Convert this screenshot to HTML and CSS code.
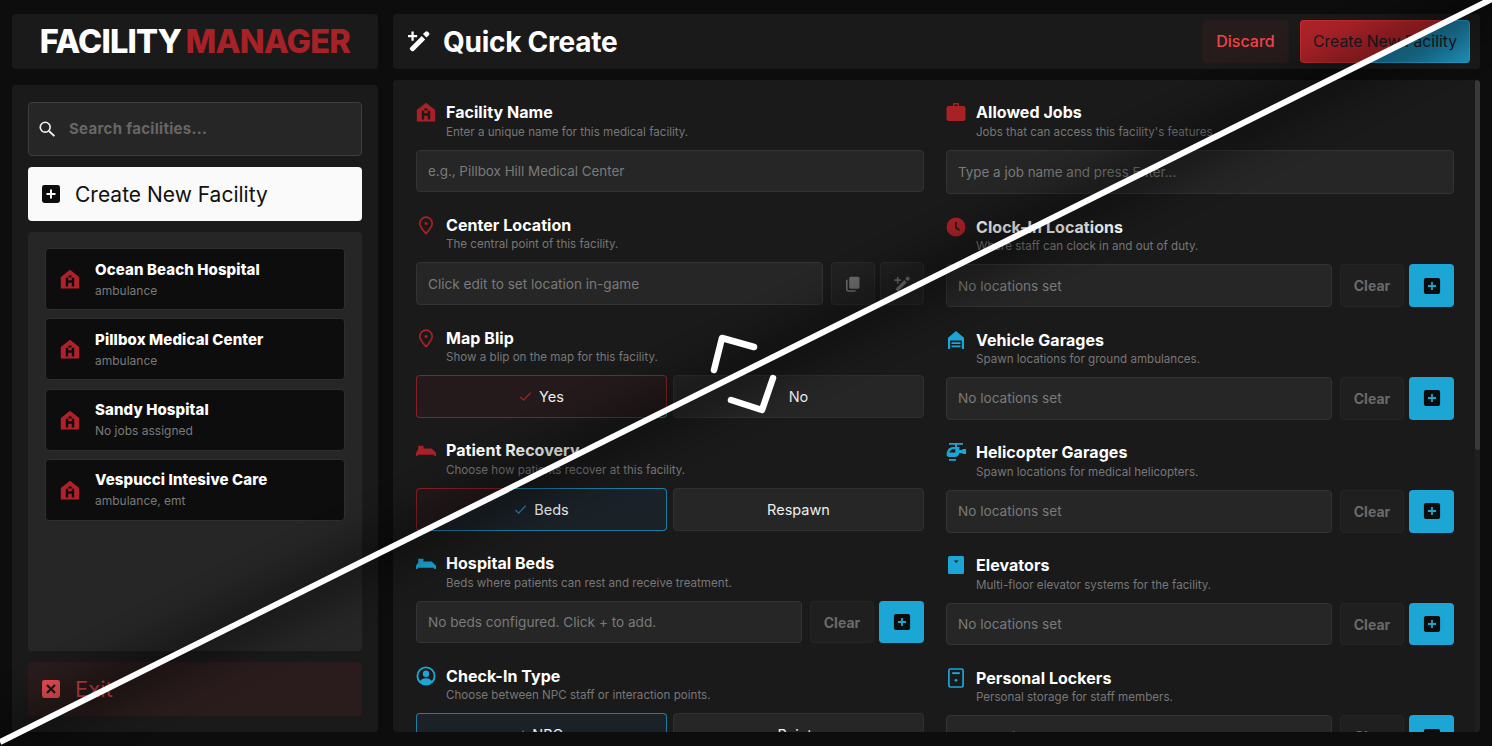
FILE: index.html
```html
<!DOCTYPE html>
<html lang="en">
<head>
<meta charset="utf-8">
<title>Facility Manager</title>
<link rel="stylesheet" href="styles.css">
</head>
<body>
<svg class="defs" width="0" height="0" aria-hidden="true">
  <symbol id="i-hospital" viewBox="0 0 20 20"><path fill-rule="evenodd" d="M.8 19.500V8L10 .8 19.200 8v11.500zM5.800 17.500h2.400v-3.800h3.600v3.800h2.400V8.800h-2.400v2.500H8.200V8.800H5.800zM8.400 8.400h3.200V6.600H8.400z"/></symbol>
  <symbol id="i-pin" viewBox="0 0 20 20"><path fill="none" stroke="currentColor" stroke-width="1.700" d="M10 18.600c-3.600-4-6.200-7-6.200-10.200a6.200 6.200 0 0 1 12.400 0c0 3.200-2.600 6.200-6.200 10.200z"/><circle cx="10" cy="8.400" r="1.500"/></symbol>
  <symbol id="i-bed" viewBox="0 0 20 20"><path d="M0 16v-3.200L2.200 9.600V5.800h5.300v2.600h8.200l4.300 4.400V16h-1.800v-1.300H1.800V16z"/></symbol>
  <symbol id="i-user" viewBox="0 0 20 20"><circle cx="10" cy="10" r="8.600" fill="none" stroke="currentColor" stroke-width="1.900"/><circle cx="10" cy="7.800" r="3.200"/><path d="M3.800 15.200c1.400-2 3.600-3 6.200-3s4.800 1 6.200 3c-1.600 2-3.800 3.200-6.200 3.200s-4.600-1.200-6.200-3.200z"/></symbol>
  <symbol id="i-case" viewBox="0 0 20 20"><path fill-rule="evenodd" d="M7 4V2.200C7 1.500 7.500 1 8.200 1h3.600c.7 0 1.200.5 1.200 1.200V4h4.600c1 0 1.900.9 1.900 1.900v11.200c0 1-.9 1.900-1.900 1.900H2.400c-1 0-1.900-.9-1.900-1.900V5.900c0-1 .9-1.900 1.900-1.900zM8.400 4h3.200V2.400H8.400z"/></symbol>
  <symbol id="i-clock" viewBox="0 0 20 20"><path fill-rule="evenodd" d="M10 .5a9.500 9.500 0 1 1 0 19 9.500 9.500 0 0 1 0-19zM9 5v6l4 3 1-1.400-3.300-2.400V5z"/></symbol>
  <symbol id="i-garage" viewBox="0 0 20 20"><path fill-rule="evenodd" d="M2 19V7.800L10 1l8 6.800V19h-2.200v-8.500H4.200V19zM5.500 12.300h9v1.800h-9zm0 3.100h9v1.800h-9z"/></symbol>
  <symbol id="i-heli" viewBox="0 0 20 20"><path fill-rule="evenodd" d="M3 1h14v1.800H11V5h2.400v3H16l1-1h3v5h-3l-1-1h-2.700c-.5 2.600-2 4-4.300 4H3c-1.300 0-2.400-.9-2.400-2.200C.6 8.600 3 5 6.800 5H9V2.800H3zM3.300 10.500h6V7.300H6.500C5.200 7.700 4 8.800 3.300 10.500zM3 17h7v1.800H3z"/></symbol>
  <symbol id="i-lift" viewBox="0 0 20 20"><path fill-rule="evenodd" d="M4 1h12.400c1 0 1.600.7 1.600 1.600v14.800c0 1-.7 1.600-1.600 1.600H3.600C2.700 19 2 18.300 2 17.400V2.600C2 1.700 2.800 1 4 1zm4 4.500h4.500L10.200 8z"/></symbol>
  <symbol id="i-locker" viewBox="0 0 20 20"><rect x="2.900" y="1" width="14.200" height="18" rx="1.400" fill="none" stroke="currentColor" stroke-width="1.700"/><rect x="6.200" y="4.200" width="7.600" height="1.900"/><circle cx="10" cy="12.300" r="1.400"/></symbol>
  <symbol id="i-wand" viewBox="0 0 24 24"><path d="M21 2.600l.9.9c.7.7.7 1.700 0 2.400l-2.300 2.300-3.300-3.300 2.300-2.300c.7-.7 1.700-.7 2.400 0zM15.100 6.700l3.300 3.300L7.400 21c-.6.600-1.500.6-2.100 0l-1.200-1.200c-.6-.6-.6-1.500 0-2.100zM5.200 2.500h2.200v3.300h3.300V8H7.400v3.300H5.200V8H1.900V5.800h3.300z"/></symbol>
  <symbol id="i-copy" viewBox="0 0 20 20"><path d="M7.500 2h8c1 0 1.700.7 1.700 1.700v10c0 1-.7 1.700-1.700 1.700h-8c-1 0-1.700-.7-1.700-1.700v-10C5.800 2.700 6.500 2 7.500 2z"/><path d="M4 5.200v10.500c0 .8.500 1.300 1.300 1.300H13v1.700H5c-1.700 0-2.800-1.100-2.800-2.800V5.200z"/></symbol>
  <symbol id="i-plus" viewBox="0 0 20 20"><rect x="1" y="1" width="18" height="18" rx="2.400" fill="var(--glyph-box, #0d0d0d)"/><path fill="none" stroke="var(--glyph-mark, #fff)" stroke-width="2" d="M10 5.500v9M5.500 10h9"/></symbol>
  <symbol id="i-close" viewBox="0 0 20 20"><rect x="1" y="1" width="18" height="18" rx="2.400" fill="#ee4f56"/><path fill="none" stroke="#1a1a1a" stroke-width="2.200" d="M6 6l8 8M14 6l-8 8"/></symbol>
  <symbol id="i-search" viewBox="0 0 20 20"><circle cx="8" cy="8" r="5.500" fill="none" stroke="currentColor" stroke-width="1.800"/><path fill="none" stroke="currentColor" stroke-width="2" d="M12.200 12.200l6 5.800"/></symbol>
  <symbol id="i-check" viewBox="0 0 14 14"><path fill="none" stroke="currentColor" stroke-width="1.300" d="M1.500 7.500l3.500 3.500 7.500-8"/></symbol>
</svg>

<div class="app">
  <aside class="side">
    <header class="brand panel"><h1 class="logo">FACILITY <span class="logo-accent">MANAGER</span></h1></header>
    <div class="side-body panel">
      <label class="search">
        <svg class="search-icon"><use href="#i-search"/></svg>
        <input class="search-input" type="text" placeholder="Search facilities...">
      </label>
      <button class="side-btn side-btn-create" type="button"><svg class="side-btn-icon"><use href="#i-plus"/></svg>Create New Facility</button>
      <ul class="facility-list">
        <li class="facility"><svg class="facility-icon"><use href="#i-hospital"/></svg><div><div class="facility-name">Ocean Beach Hospital</div><div class="facility-sub">ambulance</div></div></li>
        <li class="facility"><svg class="facility-icon"><use href="#i-hospital"/></svg><div><div class="facility-name">Pillbox Medical Center</div><div class="facility-sub">ambulance</div></div></li>
        <li class="facility"><svg class="facility-icon"><use href="#i-hospital"/></svg><div><div class="facility-name">Sandy Hospital</div><div class="facility-sub">No jobs assigned</div></div></li>
        <li class="facility"><svg class="facility-icon"><use href="#i-hospital"/></svg><div><div class="facility-name">Vespucci Intesive Care</div><div class="facility-sub">ambulance, emt</div></div></li>
      </ul>
      <button class="side-btn side-btn-exit" type="button"><svg class="side-btn-icon"><use href="#i-close"/></svg>Exit</button>
    </div>
  </aside>

  <main class="main">
    <header class="topbar panel">
      <svg class="topbar-icon"><use href="#i-wand"/></svg>
      <h2 class="topbar-title">Quick Create</h2>
      <div class="topbar-actions">
        <button class="btn-discard" type="button">Discard</button>
        <button class="btn-create" type="button">Create New Facility</button>
      </div>
    </header>

    <div class="content panel">
      <div class="scroll-track"><div class="scroll-thumb"></div></div>
      <div class="form-grid">
        <div class="col">
          <section class="field">
            <div class="field-head"><svg class="field-icon red"><use href="#i-hospital"/></svg><div><h3 class="field-title">Facility Name</h3><p class="field-desc">Enter a unique name for this medical facility.</p></div></div>
            <input class="input" type="text" placeholder="e.g., Pillbox Hill Medical Center">
          </section>
          <section class="field">
            <div class="field-head"><svg class="field-icon red"><use href="#i-pin"/></svg><div><h3 class="field-title">Center Location</h3><p class="field-desc">The central point of this facility.</p></div></div>
            <div class="row"><div class="input">Click edit to set location in-game</div><button class="icon-btn" type="button"><svg class="icon-btn-glyph"><use href="#i-copy"/></svg></button><button class="icon-btn" type="button"><svg class="icon-btn-glyph"><use href="#i-wand"/></svg></button></div>
          </section>
          <section class="field">
            <div class="field-head"><svg class="field-icon red"><use href="#i-pin"/></svg><div><h3 class="field-title">Map Blip</h3><p class="field-desc">Show a blip on the map for this facility.</p></div></div>
            <div class="toggle"><button class="opt opt-on split-red" type="button"><svg class="opt-check"><use href="#i-check"/></svg>Yes</button><button class="opt" type="button">No</button></div>
          </section>
          <section class="field">
            <div class="field-head"><svg class="field-icon red"><use href="#i-bed"/></svg><div><h3 class="field-title">Patient Recovery</h3><p class="field-desc">Choose how patients recover at this facility.</p></div></div>
            <div class="toggle"><button class="opt opt-on split-blue" type="button"><svg class="opt-check blue"><use href="#i-check"/></svg>Beds</button><button class="opt" type="button">Respawn</button></div>
          </section>
          <section class="field">
            <div class="field-head"><svg class="field-icon blue"><use href="#i-bed"/></svg><div><h3 class="field-title">Hospital Beds</h3><p class="field-desc">Beds where patients can rest and receive treatment.</p></div></div>
            <div class="row"><div class="input">No beds configured. Click + to add.</div><button class="btn-clear" type="button">Clear</button><button class="btn-add" type="button"><svg class="btn-add-glyph"><use href="#i-plus"/></svg></button></div>
          </section>
          <section class="field">
            <div class="field-head"><svg class="field-icon blue"><use href="#i-user"/></svg><div><h3 class="field-title">Check-In Type</h3><p class="field-desc">Choose between NPC staff or interaction points.</p></div></div>
            <div class="toggle"><button class="opt opt-on split-blue" type="button"><svg class="opt-check blue"><use href="#i-check"/></svg>NPCs</button><button class="opt" type="button">Points</button></div>
          </section>
        </div>

        <div class="col">
          <section class="field">
            <div class="field-head"><svg class="field-icon red"><use href="#i-case"/></svg><div><h3 class="field-title">Allowed Jobs</h3><p class="field-desc">Jobs that can access this facility's features.</p></div></div>
            <input class="input input-tall" type="text" placeholder="Type a job name and press Enter...">
          </section>
          <section class="field">
            <div class="field-head"><svg class="field-icon red"><use href="#i-clock"/></svg><div><h3 class="field-title">Clock-In Locations</h3><p class="field-desc">Where staff can clock in and out of duty.</p></div></div>
            <div class="row"><div class="input">No locations set</div><button class="btn-clear" type="button">Clear</button><button class="btn-add" type="button"><svg class="btn-add-glyph"><use href="#i-plus"/></svg></button></div>
          </section>
          <section class="field">
            <div class="field-head"><svg class="field-icon blue"><use href="#i-garage"/></svg><div><h3 class="field-title">Vehicle Garages</h3><p class="field-desc">Spawn locations for ground ambulances.</p></div></div>
            <div class="row"><div class="input">No locations set</div><button class="btn-clear" type="button">Clear</button><button class="btn-add" type="button"><svg class="btn-add-glyph"><use href="#i-plus"/></svg></button></div>
          </section>
          <section class="field">
            <div class="field-head"><svg class="field-icon blue"><use href="#i-heli"/></svg><div><h3 class="field-title">Helicopter Garages</h3><p class="field-desc">Spawn locations for medical helicopters.</p></div></div>
            <div class="row"><div class="input">No locations set</div><button class="btn-clear" type="button">Clear</button><button class="btn-add" type="button"><svg class="btn-add-glyph"><use href="#i-plus"/></svg></button></div>
          </section>
          <section class="field">
            <div class="field-head"><svg class="field-icon blue"><use href="#i-lift"/></svg><div><h3 class="field-title">Elevators</h3><p class="field-desc">Multi-floor elevator systems for the facility.</p></div></div>
            <div class="row"><div class="input">No locations set</div><button class="btn-clear" type="button">Clear</button><button class="btn-add" type="button"><svg class="btn-add-glyph"><use href="#i-plus"/></svg></button></div>
          </section>
          <section class="field">
            <div class="field-head"><svg class="field-icon blue"><use href="#i-locker"/></svg><div><h3 class="field-title">Personal Lockers</h3><p class="field-desc">Personal storage for staff members.</p></div></div>
            <div class="row"><div class="input">No locations set</div><button class="btn-clear" type="button">Clear</button><button class="btn-add" type="button"><svg class="btn-add-glyph"><use href="#i-plus"/></svg></button></div>
          </section>
        </div>
      </div>
    </div>
  </main>
</div>

<svg class="divider" viewBox="0 0 1492 746" aria-hidden="true">
  <line class="divider-shade" x1="0" y1="742" x2="1492" y2="-1"/>
  <line class="divider-line" x1="0" y1="742" x2="1492" y2="-1"/>
  <path class="divider-handle" d="M714 370l8-32 32 9M773 378l-11 32-31-10"/>
</svg>
</body>
</html>
```
FILE: styles.css
```css
* { box-sizing: border-box; margin: 0; padding: 0; }
html, body { height: 100%; overflow: hidden; }
body { background: #0d0d0d; color: #fff; font-family: Inter, "Liberation Sans", sans-serif; }
button, input { font-family: inherit; }
ul { list-style: none; }
.defs { position: absolute; }

.app { display: grid; grid-template-columns: 366px 1fr; column-gap: 15px; height: 746px; padding: 14px 12px; }
.panel { background: #1a1a1a; border-radius: 4px; }

/* Sidebar */
.side { display: flex; flex-direction: column; gap: 16px; min-height: 0; }
.brand { height: 55px; display: flex; align-items: center; justify-content: center; flex: none; }
.logo { font-size: 32.6px; font-weight: 800; letter-spacing: -0.8px; word-spacing: -2px; line-height: 1; white-space: nowrap; }
.logo-accent { color: #a82126; }
.side-body { flex: 1; display: flex; flex-direction: column; gap: 11px; padding: 17px 16px 16px; min-height: 0; }
.search { display: flex; align-items: center; height: 54px; flex: none; background: #262626; border: 1px solid #3d3d3d; border-radius: 4px; padding-left: 9px; }
.search-icon { width: 18px; height: 18px; color: #f2f2f2; flex: none; }
.search-input { flex: 1; min-width: 0; margin: 0 0 2px 13px; background: none; border: 0; outline: 0; color: #fff; font-size: 15px; font-weight: 700; letter-spacing: 0.3px; }
.search-input::placeholder { color: #666; opacity: 1; }
.side-btn { display: flex; align-items: center; gap: 14px; height: 54px; flex: none; padding-left: 13px; border: 0; border-radius: 4px; font-weight: 400; text-align: left; }
.side-btn-icon { width: 20px; height: 20px; flex: none; }
.side-btn-create { background: #fafafa; color: #111; font-size: 21px; }
.side-btn-exit { background: #2a1c1c; color: #cf3d42; font-size: 22px; }
.facility-list { flex: 1; display: flex; flex-direction: column; gap: 8.3px; padding: 16px 17px; background: #262626; border-radius: 4px; min-height: 0; }
.facility { display: flex; align-items: center; gap: 15px; height: 62px; flex: none; padding-left: 14px; background: #0d0d0d; border: 1px solid #2f2f2f; border-radius: 4px; }
.facility-icon { width: 20px; height: 20px; color: #b0212a; fill: currentColor; flex: none; }
.facility-name { font-size: 15px; line-height: 20px; font-weight: 800; letter-spacing: 0.1px; }
.facility-sub { font-size: 12px; line-height: 16px; margin-top: 3px; color: #7a7a7a; }

/* Main */
.main { display: flex; flex-direction: column; gap: 11px; min-width: 0; min-height: 0; }
.topbar { height: 55px; flex: none; display: flex; align-items: center; padding: 0 10px 0 13px; }
.topbar-icon { width: 25px; height: 25px; fill: #fff; flex: none; }
.topbar-title { margin-left: 12px; font-size: 28px; font-weight: 700; letter-spacing: -0.25px; }
.topbar-actions { margin-left: auto; display: flex; gap: 11px; margin-top: -1px; }
.btn-discard { width: 87px; height: 43px; background: #271c1c; color: #f04347; border: 1px solid #241c1c; border-radius: 4px; font-size: 16px; font-weight: 500; }
.btn-create { width: 170px; height: 43px; border: 1px solid transparent; border-radius: 4px; color: #1a1a22; font-size: 15.7px;
  background: linear-gradient(135deg, transparent 72%, rgba(33, 165, 212, 0.5)) padding-box,
              linear-gradient(to bottom right, #ac2328 50%, #1b7ba0 50%) fixed padding-box,
              linear-gradient(to bottom right, #c52a2f 50%, #1f9dc9 50%) fixed border-box; }

.content { position: relative; flex: 1; min-height: 0; padding: 22px 26px 0 23px; overflow: hidden; }
.scroll-track { position: absolute; top: 0; right: 0; bottom: 0; width: 5px; background: #1f1f1f; }
.scroll-thumb { height: 370px; background: #3a3a3a; border-radius: 3px; }
.form-grid { display: grid; grid-template-columns: 508px 508px; column-gap: 22px; align-items: start; }
.col { display: flex; flex-direction: column; gap: 22.5px; }
.field-head { display: flex; gap: 10px; height: 36px; margin-bottom: 11.5px; }
.field-icon { width: 20px; height: 20px; flex: none; fill: currentColor; }
.red { color: #a82126; }
.blue { color: #1ba6d6; }
.field-title { font-size: 16px; line-height: 20px; font-weight: 700; letter-spacing: 0.05px; }
.field-desc { font-size: 11.6px; line-height: 16px; margin-top: 1.5px; color: #777; }

.input { display: flex; align-items: center; flex: 1; min-width: 0; width: 100%; height: 42.8px; padding: 0 11px; background: #262626; border: 1px solid #333; border-radius: 4px; color: #7a7a7a; font-size: 13.6px; outline: 0; }
.input::placeholder { color: #7a7a7a; opacity: 1; font-size: 13.4px; }
.input-tall { height: 44.8px; }
.row { display: flex; gap: 6px; height: 42.8px; }
.row .input { margin-right: 2px; }
.icon-btn { width: 44px; flex: none; background: #212121; border: 1px solid #2a2a2a; border-radius: 4px; display: flex; align-items: center; justify-content: center; }
.icon-btn + .icon-btn { margin-left: -1px; }
.icon-btn-glyph { width: 18px; height: 18px; fill: #6e6e6e; }
.btn-clear { width: 64px; flex: none; background: #1f1f1f; border: 1px solid #252525; border-radius: 4px; color: #6a6a6a; font-size: 14px; font-weight: 700; }
.btn-add { width: 45px; margin-left: -1px; flex: none; background: #1ba6d6; border: 0; border-radius: 4px; display: flex; align-items: center; justify-content: center; }
.btn-add-glyph { width: 18px; height: 18px; --glyph-mark: #1ba6d6; }

.toggle { display: grid; grid-template-columns: 1fr 1fr; gap: 6px; height: 42.8px; }
.opt { display: flex; align-items: center; justify-content: center; gap: 7px; background: #262626; border: 1px solid #303030; border-radius: 4px; color: #eee; font-size: 14.5px; }
.opt-check { width: 13px; height: 13px; color: #a82126; }
.opt-check.blue { color: #1d8db5; }
.opt-on { border: 1px solid transparent; }
.split-red { background: linear-gradient(to bottom right, #241a1b 50%, #1b2228 50%) fixed padding-box,
                        linear-gradient(to bottom right, #8c2025 50%, #1d7ea3 50%) fixed border-box; }
.split-blue { background: linear-gradient(to bottom right, #241a1b 50%, #1a2127 50%) fixed padding-box,
                         linear-gradient(to bottom right, #8c2025 50%, #1d7ea3 50%) fixed border-box; }

/* Comparison divider over the page */
.divider { position: fixed; inset: 0; width: 1492px; height: 746px; pointer-events: none; }
.divider-shade { stroke: #000; stroke-width: 50; opacity: 0.32; filter: blur(18px); }
.divider-line { stroke: #fff; stroke-width: 6; }
.divider-handle { fill: none; stroke: #fff; stroke-width: 6.5; stroke-linecap: round; stroke-linejoin: round; }
```
